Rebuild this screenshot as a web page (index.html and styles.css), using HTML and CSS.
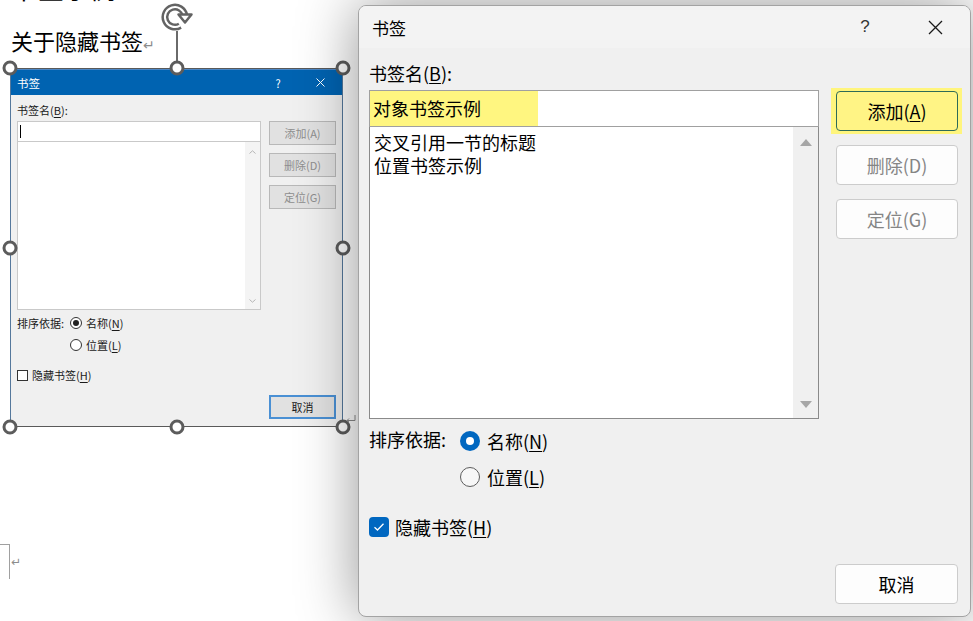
FILE: index.html
```html
<!DOCTYPE html>
<html lang="zh-CN">
<head>
  <meta charset="UTF-8">
  <meta name="viewport" content="width=device-width, initial-scale=1">
  <title>书签</title>
  <link rel="stylesheet" href="styles.css">
</head>
<body>
  <div class="desk">
    <!-- Word document behind the dialog -->
    <div class="doc">
      <div class="doc-head">书签示例</div>
      <p class="doc-title">关于隐藏书签<span class="para-mark">↵</span></p>

      <div class="frame">
        <div class="mini">
          <div class="mini-title">
            <span class="mini-name">书签</span>
            <span class="mini-help">?</span>
            <span class="mini-close">
              <svg width="9" height="9" viewBox="0 0 9 9"><path d="M0.5 0.5L8.5 8.5M8.5 0.5L0.5 8.5" stroke="#fff" stroke-width="1"/></svg>
            </span>
          </div>
          <div class="mini-body">
            <div class="mini-label">书签名(<u>B</u>):</div>
            <div class="mini-grid">
              <div>
                <div class="mini-input"><span class="mini-caret"></span></div>
                <div class="mini-list">
                  <div class="mini-scroll">
                    <svg width="7" height="4" viewBox="0 0 7 4"><path d="M0.5 3.5L3.5 0.8L6.5 3.5" fill="none" stroke="#b5b5b5"/></svg>
                    <svg width="7" height="4" viewBox="0 0 7 4"><path d="M0.5 0.5L3.5 3.2L6.5 0.5" fill="none" stroke="#b5b5b5"/></svg>
                  </div>
                </div>
              </div>
              <div class="mini-buttons">
                <div class="mini-btn is-off">添加(A)</div>
                <div class="mini-btn is-off">删除(D)</div>
                <div class="mini-btn is-off">定位(G)</div>
              </div>
            </div>
            <div class="mini-sort">
              <span class="mini-sort-label">排序依据:</span>
              <div class="mini-options">
                <div class="mini-opt"><span class="mini-radio on"></span><span>名称(<u>N</u>)</span></div>
                <div class="mini-opt"><span class="mini-radio"></span><span>位置(<u>L</u>)</span></div>
              </div>
            </div>
            <div class="mini-check"><span class="mini-box"></span><span>隐藏书签(<u>H</u>)</span></div>
            <div class="mini-foot"><div class="mini-btn is-default">取消</div></div>
          </div>
        </div>

        <!-- picture selection handles -->
        <span class="rot-line"></span>
        <svg class="rot-icon" width="44" height="36" viewBox="0 0 44 36">
          <path d="M25 25.7A10 10 0 1 1 29.8 15.3" fill="none" stroke="#636363" stroke-width="7"/>
          <path d="M25 25.7A10 10 0 1 1 29.8 15.3" fill="none" stroke="#fff" stroke-width="2"/>
          <path d="M23.5 14.5L36.5 14.5L30 22.5Z" fill="#fff" stroke="#636363" stroke-width="2.5" stroke-linejoin="round"/>
        </svg>
        <span class="handle h-tl"></span>
        <span class="handle h-tc"></span>
        <span class="handle h-tr"></span>
        <span class="handle h-ml"></span>
        <span class="handle h-mr"></span>
        <span class="handle h-bl"></span>
        <span class="handle h-bc"></span>
        <span class="handle h-br"></span>
        <svg class="mini-para" width="11" height="7" viewBox="0 0 11 7"><path d="M10 0V5.5H2M4 3.5L2 5.5L4 7" fill="none" stroke="#8a8a8a" stroke-width="1"/></svg>
      </div>

      <div class="corner-mark"><span class="corner"></span><span class="para-mark">↵</span></div>
    </div>

    <!-- Bookmark dialog -->
    <div class="dlg">
      <div class="dlg-title">
        <span class="dlg-name">书签</span>
        <span class="tb-btn tb-help">?</span>
        <span class="tb-btn">
          <svg width="15" height="15" viewBox="0 0 15 15"><path d="M1 1L14 14M14 1L1 14" stroke="#1a1a1a" stroke-width="1.3"/></svg>
        </span>
      </div>
      <div class="dlg-body">
        <div class="field-label">书签名(<u>B</u>):</div>
        <div class="main-grid">
          <div class="name-col">
            <div class="name-input"><span class="hl">对象书签示例</span></div>
            <div class="name-list">
              <div class="items">
                <div>交叉引用一节的标题</div>
                <div>位置书签示例</div>
              </div>
              <div class="scroll">
                <svg width="12" height="7" viewBox="0 0 12 7"><path d="M0 7L6 0L12 7Z" fill="#a6a6a6"/></svg>
                <svg width="12" height="7" viewBox="0 0 12 7"><path d="M0 0L6 7L12 0Z" fill="#a6a6a6"/></svg>
              </div>
            </div>
          </div>
          <div class="btn-col">
            <div class="btn-hl"><div class="btn btn-add"><span>添加(<u>A</u>)</span></div></div>
            <div class="btn is-off">删除(D)</div>
            <div class="btn is-off">定位(G)</div>
          </div>
        </div>
        <div class="sort-row">
          <span class="sort-label">排序依据:</span>
          <div class="options">
            <div class="opt"><span class="radio on"></span><span>名称(<u>N</u>)</span></div>
            <div class="opt"><span class="radio"></span><span>位置(<u>L</u>)</span></div>
          </div>
        </div>
        <div class="check">
          <span class="box">
            <svg width="12" height="10" viewBox="0 0 12 10"><path d="M1.5 5.2L4.5 8L10.5 1.8" fill="none" stroke="#fff" stroke-width="1.3"/></svg>
          </span>
          <span>隐藏书签(<u>H</u>)</span>
        </div>
        <div class="dlg-foot"><div class="btn">取消</div></div>
      </div>
    </div>
  </div>
</body>
</html>
```

FILE: styles.css
```css
/* Word page with the bookmark dialog on top */
body {
  margin: 0;
  overflow: hidden;
  background: #fff;
  font-family: "Noto Sans CJK SC", "Noto Sans", sans-serif;
  color: #000;
}
u { text-underline-offset: 2px; }

.desk {
  display: flex;
  height: 621px;
}

/* ---------- document ---------- */
.doc {
  width: 358px;
  flex: none;
}
.doc-head {
  margin-top: -27px;
  padding-left: 12px;
  font-size: 26px;
  line-height: 30px;
  height: 29px;
  overflow: hidden;
}
.doc-title {
  margin: 23px 0 13px;
  padding-left: 11px;
  font-size: 22px;
  line-height: 30px;
  height: 30px;
}
.para-mark {
  color: #8c8c8c;
  font-family: "DejaVu Sans", sans-serif;
  font-size: 14px;
}

.frame {
  position: relative;
  margin-left: 10px;
  width: 333px;
  height: 359px;
  box-sizing: border-box;
  border: 1px solid #55789c;
  border-top-color: #5a5a5a;
  border-bottom-color: #5a5a5a;
}

/* screenshot of the old-style dialog */
.mini {
  height: 100%;
  background: #f0f0f0;
  font-size: 11px;
  color: #1a1a1a;
  display: flex;
  flex-direction: column;
}
.mini-title {
  height: 26px;
  box-sizing: border-box;
  border-top: 1px solid #4a86c6;
  background: #0063b1;
  color: #fff;
  display: flex;
  align-items: center;
  padding-left: 6px;
  font-size: 11.5px;
}
.mini-name { flex: 1; }
.mini-help {
  width: 40px;
  text-align: center;
  font-size: 11px;
}
.mini-close {
  width: 44px;
  display: flex;
  justify-content: center;
}
.mini-body {
  flex: 1;
  padding: 0 6px;
  display: flex;
  flex-direction: column;
}
.mini-label {
  margin-top: 8px;
  line-height: 14px;
  margin-bottom: 4px;
}
.mini-grid {
  display: grid;
  grid-template-columns: 244px 67px;
  column-gap: 8px;
}
.mini-input {
  height: 21px;
  box-sizing: border-box;
  border: 1px solid #c9c9c9;
  background: #fff;
  padding: 3px 0 0 2px;
}
.mini-caret {
  display: block;
  width: 1px;
  height: 13px;
  background: #000;
}
.mini-list {
  height: 168px;
  box-sizing: border-box;
  border: 1px solid #c9c9c9;
  border-top: 0;
  background: #fff;
  display: flex;
  justify-content: flex-end;
}
.mini-scroll {
  width: 15px;
  background: #f4f4f4;
  display: flex;
  flex-direction: column;
  align-items: center;
  justify-content: space-between;
  padding: 8px 0 6px;
}
.mini-buttons {
  display: flex;
  flex-direction: column;
  gap: 8px;
}
.mini-btn {
  height: 24px;
  box-sizing: border-box;
  border: 1px solid #b8b8b8;
  background: #e1e1e1;
  display: flex;
  align-items: center;
  justify-content: center;
  font-size: 11px;
}
.mini-btn.is-off { color: #8e8e8e; }
.mini-btn.is-default {
  width: 67px;
  border: 2px solid #4a90d4;
}
.mini-sort {
  display: flex;
  margin-top: 5px;
}
.mini-sort-label { width: 53px; line-height: 16px; }
.mini-options {
  display: flex;
  flex-direction: column;
  gap: 6px;
}
.mini-opt {
  display: flex;
  align-items: center;
  gap: 4px;
  line-height: 16px;
}
.mini-radio {
  width: 12px;
  height: 12px;
  box-sizing: border-box;
  border: 1px solid #333;
  border-radius: 50%;
  background: #fff;
  display: flex;
  align-items: center;
  justify-content: center;
}
.mini-radio.on::after {
  content: "";
  width: 6px;
  height: 6px;
  border-radius: 50%;
  background: #222;
}
.mini-check {
  display: flex;
  align-items: center;
  gap: 4px;
  margin-top: 14px;
  line-height: 16px;
}
.mini-box {
  width: 11px;
  height: 11px;
  box-sizing: border-box;
  border: 1px solid #333;
  background: #fff;
}
.mini-foot {
  display: flex;
  justify-content: flex-end;
  margin-top: 12px;
}
.mini-foot .mini-btn { height: 24px; }

/* selection handles on the picture */
.handle {
  position: absolute;
  width: 15px;
  height: 15px;
  box-sizing: border-box;
  border: 3px solid #5c5c5c;
  border-radius: 50%;
  background: #fff;
  transform: translate(-50%, -50%);
}
.h-tl { left: -1px; top: -1px; }
.h-tc { left: 50%; top: -1px; }
.h-tr { left: calc(100% + 1px); top: -1px; }
.h-ml { left: -1px; top: 50%; }
.h-mr { left: calc(100% + 1px); top: 50%; }
.h-bl { left: -1px; top: calc(100% + 1px); }
.h-bc { left: 50%; top: calc(100% + 1px); }
.h-br { left: calc(100% + 1px); top: calc(100% + 1px); }
.rot-line {
  position: absolute;
  left: 165px;
  top: -38px;
  width: 2px;
  height: 38px;
  background: #6a6a6a;
}
.rot-icon {
  position: absolute;
  left: 144px;
  top: -69px;
}
.mini-para {
  position: absolute;
  left: 334px;
  top: 346px;
}

.corner-mark {
  display: flex;
  align-items: center;
  margin-top: 117px;
}
.corner {
  width: 10px;
  height: 35px;
  box-sizing: border-box;
  border-top: 1px solid #a0a0a0;
  border-right: 1px solid #a0a0a0;
}
.corner-mark .para-mark { font-size: 12px; margin-left: 1px; }

/* ---------- bookmark dialog ---------- */
.dlg {
  position: relative;
  flex: none;
  margin-top: 5px;
  width: 613px;
  height: 612px;
  box-sizing: border-box;
  border: 1px solid #a3a3a3;
  border-radius: 8px;
  background: #f0f0f0;
  box-shadow: 0 0 60px rgba(0,0,0,0.42);
  display: flex;
  flex-direction: column;
  overflow: hidden;
  font-size: 18px;
}
.dlg-title {
  height: 42px;
  flex: none;
  background: #f3f3f3;
  display: flex;
  align-items: center;
  padding-left: 13px;
  font-size: 17px;
}
.dlg-name { flex: 1; }
.tb-btn {
  width: 70px;
  display: flex;
  justify-content: center;
  align-items: center;
}
.tb-help {
  font-family: "Liberation Sans", sans-serif;
  font-size: 17px;
  color: #333;
}

.dlg-body {
  flex: 1;
  padding: 0 12px 12px 10px;
  display: flex;
  flex-direction: column;
}
.field-label {
  padding-top: 13px;
  line-height: 24px;
  margin-bottom: 5px;
}
.main-grid {
  display: grid;
  grid-template-columns: 450px 122px;
  column-gap: 17px;
}
.name-input {
  height: 37px;
  box-sizing: border-box;
  border: 1px solid #a0a0a0;
  background: #fff;
}
.hl {
  display: inline-block;
  width: 168px;
  height: 35px;
  line-height: 35px;
  padding-left: 3px;
  box-sizing: border-box;
  background: #fff680;
}
.name-list {
  height: 292px;
  box-sizing: border-box;
  border: 1px solid #8a8a8a;
  border-top: 0;
  background: #fff;
  display: flex;
}
.items {
  flex: 1;
  padding: 4px 0 0 4px;
  line-height: 23px;
}
.scroll {
  width: 25px;
  background: #f0f0f0;
  display: flex;
  flex-direction: column;
  align-items: center;
  justify-content: space-between;
  padding: 12px 0 10px;
}
.btn-col {
  display: flex;
  flex-direction: column;
  gap: 14px;
  padding-top: 1px;
}
.btn-hl {
  margin: -3px -4px -3px -5px;
  padding: 3px 4px 3px 5px;
  background: #fff57d;
}
.btn {
  height: 40px;
  box-sizing: border-box;
  border: 1px solid #cccccc;
  border-radius: 4px;
  background: #fdfdfd;
  display: flex;
  align-items: center;
  justify-content: center;
}
.btn.is-off { color: #858585; }
.btn-add {
  background: #fff485;
  border-color: #2e6b57;
}

.sort-row {
  display: flex;
  margin-top: 10px;
}
.sort-label {
  width: 91px;
  line-height: 20px;
}
.options {
  display: flex;
  flex-direction: column;
  gap: 12px;
}
.opt {
  display: flex;
  align-items: center;
  gap: 7px;
  line-height: 24px;
}
.radio {
  width: 20px;
  height: 20px;
  box-sizing: border-box;
  border: 1px solid #5d5d5d;
  border-radius: 50%;
  background: #f7f7f7;
  display: flex;
  align-items: center;
  justify-content: center;
}
.radio.on {
  border: 0;
  background: #0067c0;
}
.radio.on::after {
  content: "";
  width: 8px;
  height: 8px;
  border-radius: 50%;
  background: #fff;
}
.check {
  display: flex;
  align-items: center;
  gap: 6px;
  margin-top: 26px;
  line-height: 24px;
}
.box {
  width: 20px;
  height: 20px;
  border-radius: 4px;
  background: #0067c0;
  display: flex;
  align-items: center;
  justify-content: center;
}
.dlg-foot {
  margin-top: auto;
  display: flex;
  justify-content: flex-end;
}
.dlg-foot .btn { width: 123px; }
```
